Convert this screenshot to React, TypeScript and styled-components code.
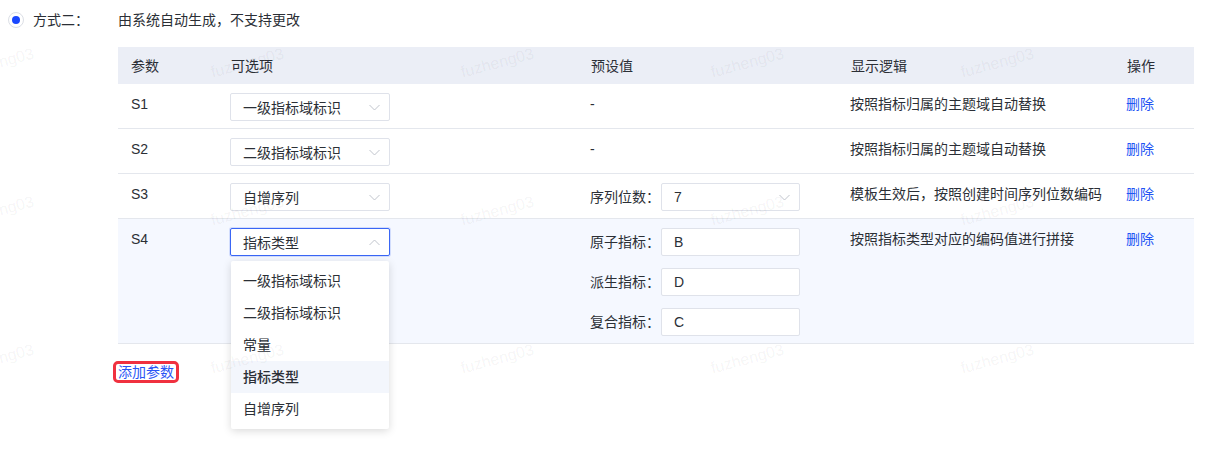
import React from 'react';
import styled, { createGlobalStyle, css } from 'styled-components';

const GlobalStyle = createGlobalStyle`
  html, body {
    margin: 0;
    padding: 0;
    background: #ffffff;
  }
  body {
    font-family: "Liberation Sans", "Noto Sans CJK SC", sans-serif;
    font-size: 14px;
    color: #2b2f36;
  }
`;

const Page = styled.div`
  position: relative;
  width: 1209px;
  height: 451px;
  overflow: hidden;
`;

const ModeRow = styled.div`
  display: flex;
  align-items: center;
  padding: 9px 0 0 8px;
  height: 22px;
`;

const Radio = styled.span`
  box-sizing: border-box;
  width: 16px;
  height: 16px;
  border-radius: 50%;
  border: 1px solid #dcdfe6;
  display: flex;
  align-items: center;
  justify-content: center;
  &::after {
    content: '';
    width: 8px;
    height: 8px;
    border-radius: 50%;
    background: #1a48ff;
  }
`;

const ModeLabel = styled.span`
  width: 85px;
  margin-left: 9px;
  line-height: 22px;
  color: #2b2f36;
`;

const ModeDesc = styled.span`
  line-height: 22px;
  color: #2b2f36;
`;

const Content = styled.div`
  margin: 16px 0 0 118px;
  width: 1076px;
`;

const cols = '100px 360px 260px 276px 80px';

const HeadRow = styled.div`
  display: grid;
  grid-template-columns: ${cols};
  height: 37px;
  align-items: center;
  background: #ebeef6;
`;

const HeadCell = styled.div`
  padding: 0 12px 0 13px;
  line-height: 20px;
  color: #2b2f36;
`;

const Row = styled.div<{ $active?: boolean }>`
  display: grid;
  grid-template-columns: ${cols};
  border-bottom: 1px solid #e4e7ed;
  background: ${(p) => (p.$active ? '#f5f8ff' : '#ffffff')};
`;

const Cell = styled.div`
  padding: 9px 12px 7px 12px;
  min-width: 0;
`;

const Text = styled.div`
  line-height: 20px;
  padding-top: 1px;
  color: #2b2f36;
  white-space: nowrap;
`;

const ParamText = styled(Text)`
  padding-left: 1px;
`;

const LinkText = styled.a`
  display: block;
  line-height: 20px;
  padding-top: 1px;
  color: #2254f4;
  text-decoration: none;
  cursor: pointer;
`;

const SelectWrap = styled.div`
  position: relative;
  width: 160px;
`;

const SelectBox = styled.div<{ $open?: boolean; $width?: number }>`
  box-sizing: border-box;
  width: ${(p) => p.$width ?? 160}px;
  height: 28px;
  display: flex;
  align-items: center;
  justify-content: space-between;
  padding: 0 9px 0 12px;
  background: #ffffff;
  border: 1px solid #dfe2ea;
  border-radius: 2px;
  color: #2b2f36;
  ${(p) =>
    p.$open &&
    css`
      border-color: #3a66f5;
      box-shadow: 0 0 0 1px rgba(58, 102, 245, 0.18);
    `}
`;

const Chevron = ({ up }: { up?: boolean }) => (
  <svg width="11" height="7" viewBox="0 0 11 7" fill="none">
    <polyline
      points={up ? '0.5,6 5.5,1 10.5,6' : '0.5,1 5.5,6 10.5,1'}
      stroke="#c0c4cc"
      strokeWidth="1"
    />
  </svg>
);

const Menu = styled.div`
  position: absolute;
  left: 1px;
  top: 33px;
  width: 158px;
  padding: 4px 0;
  background: #ffffff;
  border-radius: 2px;
  box-shadow: 0 2px 8px rgba(0, 0, 0, 0.15);
  z-index: 5;
`;

const MenuItem = styled.div<{ $selected?: boolean }>`
  height: 32px;
  line-height: 32px;
  padding: 0 12px;
  color: #2b2f36;
  background: ${(p) => (p.$selected ? '#f3f6fc' : 'transparent')};
  font-weight: ${(p) => (p.$selected ? 500 : 400)};
`;

const PresetList = styled.div`
  display: flex;
  flex-direction: column;
  gap: 12px;
`;

const PresetLine = styled.div`
  display: flex;
  align-items: center;
`;

const PresetLabel = styled.span`
  width: 71px;
  line-height: 20px;
  color: #2b2f36;
  white-space: nowrap;
`;

const InputBox = styled.div`
  box-sizing: border-box;
  width: 139px;
  height: 28px;
  display: flex;
  align-items: center;
  padding: 0 12px;
  background: #ffffff;
  border: 1px solid #dfe2ea;
  border-radius: 2px;
  color: #2b2f36;
`;

const AddButton = styled.button`
  margin: 17px 0 0 -5px;
  padding: 0 2px;
  height: 22px;
  box-sizing: border-box;
  background: #ffffff;
  border: 3px solid #f0313f;
  border-radius: 5px;
  color: #2a55f5;
  font-family: inherit;
  font-size: 14px;
  line-height: 16px;
  cursor: pointer;
`;

const Watermark = styled.div`
  position: absolute;
  inset: 0;
  pointer-events: none;
  display: grid;
  grid-template-columns: repeat(5, 250px);
  grid-auto-rows: 148px;
  padding-top: 58px;
  margin-left: -3px;
  z-index: 10;
`;

const Mark = styled.span`
  display: block;
  width: 80px;
  font-size: 16px;
  line-height: 20px;
  color: rgba(0, 0, 0, 0.055);
  transform: rotate(-15deg);
  transform-origin: left bottom;
  white-space: nowrap;
`;

const rows = [
  { key: 'S1', option: '一级指标域标识', logic: '按照指标归属的主题域自动替换' },
  { key: 'S2', option: '二级指标域标识', logic: '按照指标归属的主题域自动替换' },
  { key: 'S3', option: '自增序列', logic: '模板生效后，按照创建时间序列位数编码' },
];

const options = ['一级指标域标识', '二级指标域标识', '常量', '指标类型', '自增序列'];

const presets = [
  { label: '原子指标：', value: 'B' },
  { label: '派生指标：', value: 'D' },
  { label: '复合指标：', value: 'C' },
];

export default function App() {
  return (
    <Page>
      <GlobalStyle />
      <ModeRow>
        <Radio />
        <ModeLabel>方式二：</ModeLabel>
        <ModeDesc>由系统自动生成，不支持更改</ModeDesc>
      </ModeRow>

      <Content>
        <HeadRow>
          <HeadCell>参数</HeadCell>
          <HeadCell>可选项</HeadCell>
          <HeadCell>预设值</HeadCell>
          <HeadCell>显示逻辑</HeadCell>
          <HeadCell>操作</HeadCell>
        </HeadRow>

        {rows.map((r) => (
          <Row key={r.key}>
            <Cell>
              <ParamText>{r.key}</ParamText>
            </Cell>
            <Cell>
              <SelectBox>
                <span>{r.option}</span>
                <Chevron />
              </SelectBox>
            </Cell>
            <Cell>
              {r.key === 'S3' ? (
                <PresetLine>
                  <PresetLabel>序列位数：</PresetLabel>
                  <SelectBox $width={139}>
                    <span>7</span>
                    <Chevron />
                  </SelectBox>
                </PresetLine>
              ) : (
                <Text>-</Text>
              )}
            </Cell>
            <Cell>
              <Text>{r.logic}</Text>
            </Cell>
            <Cell>
              <LinkText>删除</LinkText>
            </Cell>
          </Row>
        ))}

        <Row $active>
          <Cell>
            <ParamText>S4</ParamText>
          </Cell>
          <Cell>
            <SelectWrap>
              <SelectBox $open>
                <span>指标类型</span>
                <Chevron up />
              </SelectBox>
              <Menu>
                {options.map((o) => (
                  <MenuItem key={o} $selected={o === '指标类型'}>
                    {o}
                  </MenuItem>
                ))}
              </Menu>
            </SelectWrap>
          </Cell>
          <Cell>
            <PresetList>
              {presets.map((p) => (
                <PresetLine key={p.label}>
                  <PresetLabel>{p.label}</PresetLabel>
                  <InputBox>{p.value}</InputBox>
                </PresetLine>
              ))}
            </PresetList>
          </Cell>
          <Cell>
            <Text>按照指标类型对应的编码值进行拼接</Text>
          </Cell>
          <Cell>
            <LinkText>删除</LinkText>
          </Cell>
        </Row>

        <AddButton type="button">添加参数</AddButton>
      </Content>

      <Watermark>
        {Array.from({ length: 15 }).map((_, i) => (
          <Mark key={i}>fuzheng03</Mark>
        ))}
      </Watermark>
    </Page>
  );
}
